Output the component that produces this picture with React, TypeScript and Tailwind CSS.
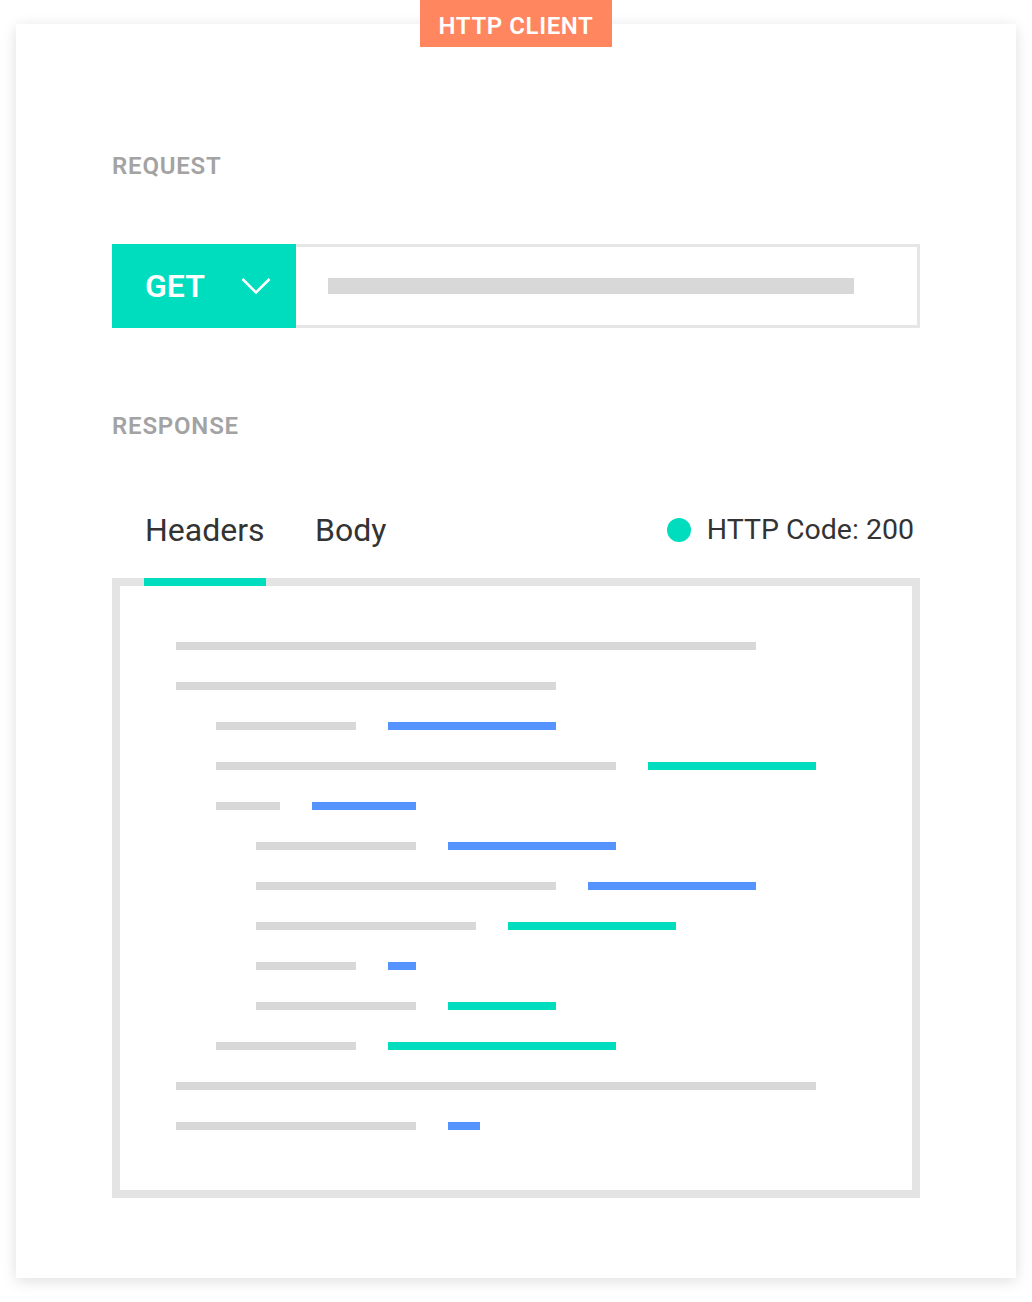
import React from "react";

type CodeLine = {
  level: 0 | 1 | 2;
  key: number;
  value?: number;
  tone?: "blue" | "teal";
};

const lines: CodeLine[] = [
  { level: 0, key: 580 },
  { level: 0, key: 380 },
  { level: 1, key: 140, value: 168, tone: "blue" },
  { level: 1, key: 400, value: 168, tone: "teal" },
  { level: 1, key: 64, value: 104, tone: "blue" },
  { level: 2, key: 160, value: 168, tone: "blue" },
  { level: 2, key: 300, value: 168, tone: "blue" },
  { level: 2, key: 220, value: 168, tone: "teal" },
  { level: 2, key: 100, value: 28, tone: "blue" },
  { level: 2, key: 160, value: 108, tone: "teal" },
  { level: 1, key: 140, value: 228, tone: "teal" },
  { level: 0, key: 640 },
  { level: 0, key: 240, value: 32, tone: "blue" },
];

const indent = ["pl-0", "pl-[40px]", "pl-[80px]"];

const App = () => {
  return (
    <div className="relative bg-white px-[16px] pt-[24px] pb-[24px] font-['Roboto',sans-serif]">
      {/* badge */}
      <div className="absolute top-0 left-1/2 z-10 flex h-[47px] w-[192px] -translate-x-1/2 items-center justify-center bg-[#ff865f] pt-[4px] text-[24px] font-semibold tracking-[0.6px] text-white">
        HTTP CLIENT
      </div>

      <div className="w-[1000px] bg-white px-[96px] pt-[128px] pb-[80px] shadow-[0_3px_14px_rgba(0,0,0,0.13)]">
        <div className="text-[24px] leading-[28px] font-semibold tracking-[0.8px] text-[#a3a3a3]">
          REQUEST
        </div>

        {/* request bar */}
        <div className="mt-[64px] flex h-[84px]">
          <div className="flex w-[184px] items-center justify-between bg-[#00ddbe] pl-[33px] pr-[25px] text-white">
            <span className="text-[32px] font-semibold">GET</span>
            <svg width="30" height="18" viewBox="0 0 30 18" fill="none">
              <path
                d="M1.5 2L15 15.5L28.5 2"
                stroke="white"
                strokeWidth="2.6"
              />
            </svg>
          </div>
          <div className="flex flex-1 items-center border-[3px] border-l-0 border-[#e6e6e6] pl-[32px]">
            <div className="h-[16px] w-[526px] bg-[#d8d8d8]" />
          </div>
        </div>

        <div className="mt-[84px] text-[24px] leading-[28px] font-semibold tracking-[0.8px] text-[#a3a3a3]">
          RESPONSE
        </div>

        {/* tabs */}
        <div className="mt-[70px] flex items-end justify-between pr-[6px]">
          <div className="flex items-end gap-[49px] pl-[32px]">
            <div className="relative z-10 mb-[-8px] flex w-[122px] flex-col">
              <span className="pl-px text-[32px] leading-[40px] text-[#333333]">
                Headers
              </span>
              <div className="mt-[28px] h-[8px] bg-[#00ddbe]" />
            </div>
            <div className="mb-[28px] text-[32px] leading-[40px] text-[#333333]">
              Body
            </div>
          </div>
          <div className="mb-[28px] flex h-[40px] items-center gap-[16px]">
            <div className="h-[24px] w-[24px] rounded-full bg-[#00ddbe]" />
            <span className="text-[28.5px] text-[#333333]">HTTP Code: 200</span>
          </div>
        </div>

        {/* response body */}
        <div className="flex flex-col gap-[32px] border-[8px] border-[#e4e4e4] pt-[56px] pb-[60px] pl-[56px]">
          {lines.map((line, i) => (
            <div key={i} className={`flex h-[8px] gap-[32px] ${indent[line.level]}`}>
              <div className="h-full bg-[#d8d8d8]" style={{ width: line.key }} />
              {line.value && (
                <div
                  className={`h-full ${line.tone === "blue" ? "bg-[#5594ff]" : "bg-[#00ddbe]"}`}
                  style={{ width: line.value }}
                />
              )}
            </div>
          ))}
        </div>
      </div>
    </div>
  );
};

export default App;
